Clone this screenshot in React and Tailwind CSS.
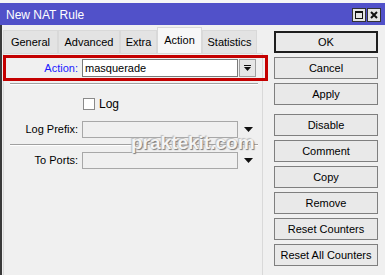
import React from "react";

function Tab({ label, width, active }) {
  return (
    <div
      className={
        active
          ? "h-[26px] flex items-center justify-center border border-b-0 border-[#d9d9d9] bg-[#f7f7f7] text-black"
          : "h-[23px] flex items-center justify-center border border-b-0 border-[#d9d9d9] bg-[#e3e3e3] text-black"
      }
      style={{ width }}
    >
      {label}
    </div>
  );
}

function FieldRow({ label, className }) {
  return (
    <div className={"flex items-center " + className}>
      <div className="w-[75px] text-right pr-[1px]">{label}</div>
      <div className="ml-[3px] w-[156px] h-[17px] border border-[#a8a8a8] bg-[#f0f0f0]"></div>
      <svg className="ml-[6px]" width="9" height="6" viewBox="0 0 9 6">
        <polygon points="0,0 9,0 4.5,5" fill="#111" />
      </svg>
    </div>
  );
}

function Separator({ className }) {
  return (
    <div className={"ml-[6px] w-[248px] border-t border-[#a0a0a0] border-b border-b-white " + className}></div>
  );
}

function Btn({ label, primary, className = "" }) {
  return (
    <div
      className={
        (primary
          ? "border-2 border-[#1e1e1e] "
          : "border border-[#7f7f7f] ") +
        "h-[22px] w-[104px] bg-[#e9e9e9] flex items-center justify-center text-black " +
        className
      }
    >
      {label}
    </div>
  );
}

export default function App() {
  const tabs = [
    { label: "General", width: 55 },
    { label: "Advanced", width: 62 },
    { label: "Extra", width: 37 },
    { label: "Action", width: 45, active: true },
    { label: "Statistics", width: 55 },
  ];

  return (
    <div className="relative w-[385px] h-[275px] overflow-hidden bg-white text-[11px] font-['Liberation_Sans',Arial,sans-serif]">
      {/* strip of window behind */}
      <div className="h-[3px] bg-[#f6f6f6]"></div>

      {/* Title bar */}
      <div className="h-[22px] bg-[#5151c9] flex items-center pl-[6px] pr-[4px]">
        <span className="text-white text-[12px] mt-[2px]">New NAT Rule</span>
        <div className="ml-auto flex gap-[1px] mt-[2px]">
          <div className="w-[14px] h-[14px] bg-[#e4e4e4] border border-[#333] flex items-center justify-center">
            <div className="w-[8px] h-[8px] border border-[#111] border-t-2"></div>
          </div>
          <div className="w-[14px] h-[14px] bg-[#e4e4e4] border border-[#333] flex items-center justify-center">
            <svg width="8" height="8" viewBox="0 0 8 8">
              <path d="M1 1 L7 7 M7 1 L1 7" stroke="#111" strokeWidth="2" />
            </svg>
          </div>
        </div>
      </div>

      {/* Body */}
      <div className="flex h-[250px] bg-[#f0f0f0] border-l-2 border-[#3a3a3a]">
        {/* Left: tabs + panel */}
        <div className="w-[266px] flex flex-col">
          <div className="h-[28px] flex items-end pl-[1px]">
            {tabs.map((t) => (
              <Tab key={t.label} {...t} />
            ))}
          </div>
          <div className="flex-1 ml-[1px] w-[260px] border border-[#d9d9d9] border-b-0 bg-[#f0f0f0]">
            {/* Action row (highlighted) */}
            <div className="-ml-px mt-[1px] w-[265px] h-[26px] border-[3px] border-[#c40000] flex items-center">
              <div className="w-[73px] text-right text-[#1a1aff] pr-[1px]">Action:</div>
              <div className="ml-[3px] w-[156px] h-[18px] border border-[#7a7a7a] bg-white flex items-center pl-[2px] text-black">
                masquerade
              </div>
              <div className="ml-[1px] w-[17px] h-[18px] border border-[#a0a0a0] bg-[#e6e6e6] flex flex-col items-center justify-center">
                <div className="w-[7px] h-[1.5px] bg-[#111] mb-[1px]"></div>
                <svg width="7" height="4" viewBox="0 0 7 4">
                  <polygon points="0,0 7,0 3.5,4" fill="#111" />
                </svg>
              </div>
            </div>

            <Separator className="mt-[2px]" />

            <div className="flex items-center mt-[10px] ml-[79px]">
              <div className="w-[12px] h-[12px] border border-[#8a8a8a] bg-white"></div>
              <span className="ml-[4px] text-[12px]">Log</span>
            </div>

            <FieldRow label="Log Prefix:" className="mt-[8px]" />

            <Separator className="mt-[6px]" />

            <FieldRow label="To Ports:" className="mt-[6px]" />
          </div>
        </div>

        {/* Right: buttons */}
        <div className="pl-[6px] pt-[6px] flex flex-col gap-[4px]">
          <Btn label="OK" primary />
          <Btn label="Cancel" />
          <Btn label="Apply" />
          <Btn label="Disable" className="mt-[5px]" />
          <Btn label="Comment" />
          <Btn label="Copy" />
          <Btn label="Remove" />
          <Btn label="Reset Counters" />
          <Btn label="Reset All Counters" />
        </div>
      </div>

      {/* Watermark */}
      <div className="absolute left-[131px] top-[129px] text-[19px] font-bold text-[#f4f4f4] [text-shadow:1px_1px_1px_#7a7a7a,-1px_-1px_1px_#bdbdbd]">
        praktekit.com
      </div>
    </div>
  );
}
